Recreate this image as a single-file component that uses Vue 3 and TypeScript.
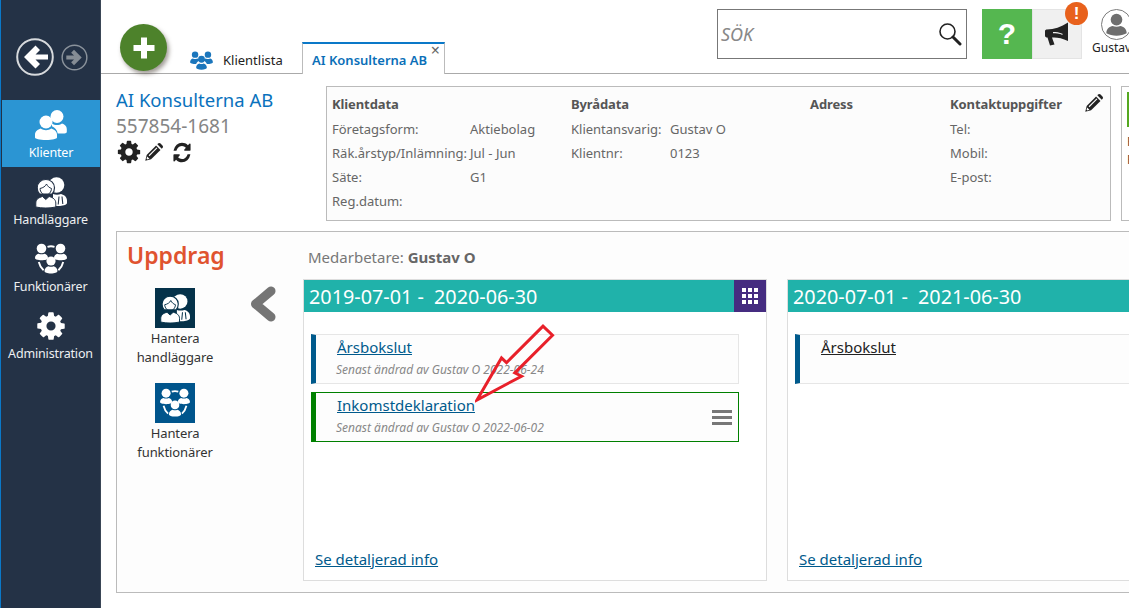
<script setup lang="ts">
// sidomeny och uppdragskort drivs av enkla listor
const nav = [
  { label: 'Klienter', icon: 'i-clients', active: true },
  { label: 'Handläggare', icon: 'i-officer', active: false },
  { label: 'Funktionärer', icon: 'i-roles', active: false },
  { label: 'Administration', icon: 'i-gear', active: false },
]

const tools = [
  { lines: ['Hantera', 'handläggare'], icon: 'i-officer', cls: 'dark' },
  { lines: ['Hantera', 'funktionärer'], icon: 'i-roles', cls: 'blue' },
]

const infoCols = [
  {
    title: 'Klientdata',
    cls: 'c1',
    rows: [
      ['Företagsform:', 'Aktiebolag'],
      ['Räk.årstyp/Inlämning:', 'Jul - Jun'],
      ['Säte:', 'G1'],
      ['Reg.datum:', ''],
    ],
  },
  {
    title: 'Byrådata',
    cls: 'c2',
    rows: [
      ['Klientansvarig:', 'Gustav O'],
      ['Klientnr:', '0123'],
    ],
  },
  { title: 'Adress', cls: 'c3', rows: [] },
  {
    title: 'Kontaktuppgifter',
    cls: 'c4',
    rows: [
      ['Tel:', ''],
      ['Mobil:', ''],
      ['E-post:', ''],
    ],
  },
]
</script>

<template>
  <svg class="sprite" aria-hidden="true">
    <symbol id="i-gear" viewBox="0 0 1792 1792">
      <path d="M1152 896q0-106-75-181t-181-75-181 75-75 181 75 181 181 75 181-75 75-181zm512-109v222q0 12-8 23t-20 13l-185 28q-19 54-39 91 35 50 107 138 10 12 10 25t-9 23q-27 37-99 108t-94 71q-12 0-26-9l-138-108q-44 23-91 38-16 136-29 186-7 28-36 28h-222q-14 0-24.5-8.5t-11.5-21.5l-28-184q-49-16-90-37l-141 107q-10 9-25 9-14 0-25-11-126-114-165-168-7-10-7-23 0-12 8-23 15-21 51-66.5t54-70.5q-27-50-41-99l-183-27q-13-2-21-12.5t-8-23.5v-222q0-12 8-23t19-13l186-28q14-46 39-92-40-57-107-138-10-12-10-24 0-10 9-23 26-36 98.5-107.5t94.5-71.5q13 0 26 10l138 107q44-23 91-38 16-136 29-186 7-28 36-28h222q14 0 24.5 8.5t11.5 21.5l28 184q49 16 90 37l142-107q9-9 24-9 13 0 25 10 129 119 165 170 7 8 7 22 0 12-8 23-15 21-51 66.5t-54 70.5q26 50 41 98l183 28q13 2 21 12.5t8 23.5z" />
    </symbol>
    <symbol id="i-pencil" viewBox="0 0 24 24">
      <path d="M1.500 22.500l1.700-7L14.500 4.200l5.300 5.300L8.500 20.800z" />
      <path d="M16 2.700l.8-.8c.9-.9 2.200-.9 3.100 0l2.200 2.200c.9.900.9 2.200 0 3.100l-.8.8z" />
      <path d="M6 16.500L15.500 7" stroke="#fff" stroke-width="1.300" fill="none" />
      <path d="M3.800 17.500l2.700 2.700-2.600.7-.8-.8z" fill="#fff" />
    </symbol>
    <symbol id="i-refresh" viewBox="0 0 1792 1792" preserveAspectRatio="none">
      <path d="M1639 1056q0 5-1 7-64 268-268 434.5t-478 166.5q-146 0-282.5-55t-243.5-157l-129 129q-19 19-45 19t-45-19-19-45v-448q0-26 19-45t45-19h448q26 0 45 19t19 45-19 45l-137 137q71 66 161 102t187 36q134 0 250-65t186-179q11-17 53-117 8-23 30-23h192q13 0 22.5 9.5t9.5 22.5zm25-800v448q0 26-19 45t-45 19h-448q-26 0-45-19t-19-45 19-45l138-138q-148-137-349-137-134 0-250 65t-186 179q-11 17-53 117-8 23-30 23h-199q-13 0-22.5-9.5t-9.5-22.5v-7q65-268 270-434.5t480-166.5q146 0 284 55.5t245 156.5l130-129q19-19 45-19t45 19 19 45z" />
    </symbol>
    <symbol id="i-clients" viewBox="0 0 32 32">
      <circle cx="22" cy="7.500" r="6.500" />
      <path d="M17 14.500c3 2 7 2 10 0 2.500.8 4.800 2.500 4.800 5.500v2.800c0 1-1 1.700-2.300 1.700h-6.800c-.6-3.600-2.800-6-5.700-7.200 0-1.300 0-2 0-2z" />
      <circle cx="11" cy="13" r="6.500" />
      <path d="M5.700 19.500c3 2.300 7.600 2.300 10.600 0 3 .9 5.700 3 5.700 6v3c0 1.300-4.500 2.500-11 2.500S0 29.800 0 28.500v-3c0-3 2.700-5.100 5.700-6z" />
    </symbol>
    <symbol id="i-officer" viewBox="0 0 32 32">
      <circle cx="21.500" cy="9" r="7.800" />
      <path d="M18 18c2.500 1 5.500 1 8 0 3.500.9 6 3 6 6.500V27c0 1.500-3 2.700-7 3h-7z" />
      <path d="M24 20.500l-.8 8M27 20.500l.8 7.500" fill="none" stroke="var(--cut)" stroke-width="1.100" />
      <path d="M10.800 3.500c5 0 8.700 3.500 8.700 8.200 0 2.800-.9 4.800-2.400 6.300H4.500C3 16.500 2.200 14.500 2.200 11.700c0-4.700 3.600-8.200 8.600-8.200z" stroke="var(--cut)" stroke-width="1.200" />
      <path d="M5 12.500c3-.6 5.500-2.200 6.500-4.500 1 2.200 2.800 3.800 5 4.500M5 12.500c.2 3.500 2.700 6.500 5.800 6.500s5.500-3 5.700-6.500" fill="none" stroke="var(--cut)" stroke-width="1" />
      <path d="M.8 31v-4c0-3.500 2.900-5.500 6.700-6.500l3.300 3 3.300-3c3.800 1 6.700 3 6.700 6.500v4c-3 .7-6.500 1-10 1s-7-.3-10-1z" stroke="var(--cut)" stroke-width="1" />
    </symbol>
    <symbol id="i-roles" viewBox="0 0 32 32">
      <circle cx="6.500" cy="5.500" r="4.800" />
      <path d="M0 15c0-2.500 2-4 3.500-4.300 1.800.8 4.200.8 6 0 1.500.3 3.500 1.800 3.500 4.300 0 1.300-2.800 2.300-6.500 2.300S0 16.300 0 15z" />
      <circle cx="25.500" cy="5.500" r="4.800" />
      <path d="M19 15c0-2.500 2-4 3.500-4.300 1.800.8 4.200.8 6 0 1.500.3 3.500 1.800 3.500 4.300 0 1.300-2.800 2.300-6.500 2.300S19 16.300 19 15z" />
      <circle cx="16" cy="18" r="4.600" />
      <path d="M9.500 28c0-2.700 2.200-4.500 4-4.800 1.500.8 3.500.8 5 0 1.800.3 4 2.100 4 4.800 0 1.500-2.800 2.500-6.500 2.500S9.500 29.500 9.500 28z" />
      <path fill="none" stroke="currentColor" stroke-width="1.900" d="M12.500 3.800c2.200-.7 4.800-.7 7 0M3.800 19c.8 3.500 2.400 6.200 4.800 8.300M28.200 19c-.8 3.500-2.400 6.200-4.800 8.300" />
    </symbol>
  </svg>

  <div class="shell">
    <aside class="side">
      <div class="history">
        <svg class="hist-back" viewBox="0 0 40 40">
          <circle cx="20" cy="20" r="17.800" fill="none" stroke="#d7dadd" stroke-width="2" />
          <path d="M20.500 8.500l4.500 4.500-4.500 4.500H33v5H20.500l4.500 4.500-4.500 4.500L9 20z" fill="#fff" />
        </svg>
        <svg class="hist-next" viewBox="0 0 28 28">
          <circle cx="14" cy="14" r="12.800" fill="none" stroke="#8a929b" stroke-width="1.500" />
          <path d="M13.500 6l-3 3 3 3H5.500v4h8l-3 3 3 3L21.500 14z" fill="#858c94" />
        </svg>
      </div>
      <nav class="nav">
        <a v-for="item in nav" :key="item.label" class="nav-item" :class="{ active: item.active }">
          <svg class="nav-icon"><use :href="'#' + item.icon" /></svg>
          <span>{{ item.label }}</span>
        </a>
      </nav>
    </aside>

    <main class="main">
      <header class="top">
        <button class="add">
          <svg viewBox="0 0 24 24"><path d="M9 1.500h6V9h7.500v6H15v7.500H9V15H1.500V9H9z" fill="#fff" /></svg>
        </button>
        <div class="tabs">
          <div class="tab list">
            <svg class="tab-icon" viewBox="0 0 32 28">
              <g fill="#1b76bc">
                <circle cx="7" cy="6.500" r="4.500" /><path d="M0 17c0-3 2.500-5 4-5.200 2 1 4 1 6 0 1.300.3 3 1.200 3.500 2.800-2.500 1-4.500 2.600-5 5-5 0-8.500-1-8.500-2.600z" />
                <circle cx="25" cy="6.500" r="4.500" /><path d="M32 17c0-3-2.500-5-4-5.200-2 1-4 1-6 0-1.300.3-3 1.200-3.500 2.800 2.500 1 4.500 2.600 5 5 5 0 8.500-1 8.500-2.600z" />
                <circle cx="16" cy="13" r="4.800" /><path d="M8.500 24.500c0-3 2.500-5.200 4.500-5.600 2 1 4 1 6 0 2 .4 4.500 2.600 4.500 5.600 0 1.800-3.300 3-7.500 3s-7.500-1.200-7.500-3z" />
              </g>
            </svg>
            <span>Klientlista</span>
          </div>
          <div class="tab current">
            <span>AI Konsulterna AB</span>
            <i class="close">×</i>
          </div>
        </div>
        <div class="search">
          <span class="search-hint">SÖK</span>
          <svg viewBox="0 0 24 24">
            <circle cx="9.500" cy="9.500" r="7.500" fill="none" stroke="#222" stroke-width="1.600" />
            <path d="M15 15l7 7" stroke="#222" stroke-width="3" stroke-linecap="round" />
          </svg>
        </div>
        <button class="help">?</button>
        <button class="news">
          <svg viewBox="0 0 26 24">
            <path d="M1 9c0-1 1-1.500 2-1.500 7 0 14-2.500 21-7V19c-6-3-12-4-16-3.500l2.500 7-4.500 1-2.500-8C2 15.500 1 15 1 13.500z" fill="#222" />
            <path d="M9 11.200c3 0 6.500.2 9.500 1.800v-1.200c-3-1.400-6.500-1.800-9.500-1.800z" fill="#f0f0f0" />
          </svg>
          <span class="badge">!</span>
        </button>
        <div class="user">
          <svg viewBox="0 0 32 32">
            <circle cx="16" cy="16" r="15.500" fill="#fff" stroke="#777" />
            <circle cx="16" cy="11" r="6" fill="#6e6e6e" />
            <path d="M5.500 25c0-5 3.500-7 6.500-7.500 2.500 1 5.500 1 8 0 3 .5 6.500 2.500 6.500 7.500-3 1.500-6.500 2.500-10.500 2.500S8.500 26.500 5.500 25z" fill="#6e6e6e" />
          </svg>
          <span>Gustav O</span>
        </div>
      </header>

      <section class="client">
        <div class="identity">
          <h1>AI Konsulterna AB</h1>
          <div class="orgnr">557854-1681</div>
          <div class="actions">
            <svg class="a-gear"><use href="#i-gear" /></svg>
            <svg class="a-pencil"><use href="#i-pencil" /></svg>
            <svg class="a-refresh"><use href="#i-refresh" /></svg>
          </div>
        </div>
        <div class="info">
          <div v-for="col in infoCols" :key="col.title" class="info-col" :class="col.cls">
            <h3>{{ col.title }}</h3>
            <div v-for="row in col.rows" :key="row[0]" class="info-row">
              <span>{{ row[0] }}</span><span>{{ row[1] }}</span>
            </div>
          </div>
          <svg class="info-edit"><use href="#i-pencil" /></svg>
        </div>
        <div class="next-box">
          <div class="next-flag"></div>
          <div class="next-line">F</div>
          <div class="next-line">F</div>
        </div>
      </section>

      <section class="panel">
        <div class="panel-side">
          <h2>Uppdrag</h2>
          <div class="panel-tools">
            <div class="tools">
              <a v-for="tool in tools" :key="tool.icon" class="tool">
                <span class="tool-icon" :class="tool.cls"><svg><use :href="'#' + tool.icon" /></svg></span>
                <span v-for="line in tool.lines" :key="line" class="tool-line">{{ line }}</span>
              </a>
            </div>
            <svg class="prev" viewBox="0 0 28 38">
              <path d="M22 6L6.500 19 22 32" fill="none" stroke="#757575" stroke-width="9" stroke-linejoin="round" stroke-linecap="round" />
            </svg>
          </div>
        </div>

        <div class="panel-body">
          <div class="staff">Medarbetare: <b>Gustav O</b></div>
          <div class="years">
            <article class="year">
              <div class="year-head">
                <span>2019-07-01 -&nbsp; 2020-06-30</span>
                <span class="year-menu">
                  <svg viewBox="0 0 16 16"><path d="M0 0h4v4H0zM6 0h4v4H6zM12 0h4v4h-4zM0 6h4v4H0zM6 6h4v4H6zM12 6h4v4h-4zM0 12h4v4H0zM6 12h4v4H6zM12 12h4v4h-4z" fill="#fff" /></svg>
                </span>
              </div>
              <div class="year-rows">
                <div class="job">
                  <a class="job-title">Årsbokslut</a>
                  <div class="job-meta">Senast ändrad av Gustav O 2022-06-24</div>
                </div>
                <div class="job hot">
                  <a class="job-title">Inkomstdeklaration</a>
                  <div class="job-meta">Senast ändrad av Gustav O 2022-06-02</div>
                  <span class="burger"><i></i><i></i><i></i></span>
                </div>
              </div>
              <a class="more">Se detaljerad info</a>
            </article>

            <article class="year">
              <div class="year-head"><span>2020-07-01 -&nbsp; 2021-06-30</span></div>
              <div class="year-rows">
                <div class="job plain">
                  <a class="job-title">Årsbokslut</a>
                </div>
              </div>
              <a class="more">Se detaljerad info</a>
            </article>
          </div>
        </div>
      </section>

      <!-- utritad pil ovanpa skarmbilden -->
      <svg class="callout" viewBox="0 0 90 85">
        <path d="M2 79L26.500 37l5 4.700 36.500-36.500 9.500 9-37.700 37.700 6.700 3.300z" fill="none" stroke="#e8202a" stroke-width="3" />
      </svg>
    </main>
  </div>
</template>

<style>
html, body { margin: 0; background: #fff; overflow: hidden; }
</style>

<style scoped>
.sprite { position: absolute; width: 0; height: 0; overflow: hidden; }
.shell { display: flex; width: 1129px; height: 608px; overflow: hidden; font-family: "Noto Sans", "Open Sans", sans-serif; color: #333; font-size: 13px; }

.side { flex: 0 0 101px; box-sizing: border-box; background: #243246; border-left: 1px solid #0a78c8; border-right: 1px solid #3a4656; color: #e8eaed; --cut: #243246; }
.history { display: flex; align-items: center; height: 100px; padding: 14px 0 0 14px; box-sizing: border-box; gap: 6px; }
.hist-back { width: 40px; height: 40px; }
.hist-next { width: 27px; height: 27px; }
.nav { display: flex; flex-direction: column; }
.nav-item { height: 67px; display: flex; flex-direction: column; align-items: center; justify-content: flex-end; padding-bottom: 6px; box-sizing: border-box; font-size: 12.5px; letter-spacing: -.15px; white-space: nowrap; color: #eef0f2; }
.nav-item.active { background: #2b95d3; margin-left: 1px; color: #fff; }
.nav-icon { width: 32px; height: 32px; fill: #fff; color: #fff; margin-bottom: 3px; }

.main { position: relative; flex: 1; min-width: 0; }
.top { position: relative; display: flex; height: 74px; box-sizing: border-box; border-bottom: 1px solid #aaa; }
.add { flex: none; width: 47px; height: 47px; margin: 24px 0 0 19px; padding: 0; border: 0; border-radius: 50%; background: #4d822b; box-shadow: 2px 3px 4px rgba(70, 60, 50, .5); display: flex; align-items: center; justify-content: center; z-index: 1; }
.add svg { width: 24px; height: 24px; }
.tabs { display: flex; align-items: flex-end; margin-left: 11px; width: 267px; height: 73px; align-self: flex-start; }
.tab { display: flex; align-items: center; height: 32px; box-sizing: border-box; }
.tab.list { width: 124px; padding: 6px 0 0 12px; gap: 10px; }
.tab-icon { width: 23px; height: 20px; }
.tab.list span { font-size: 13px; color: #222; }
.tab.current { position: relative; width: 143px; background: #fff; border: 1px solid #bbb; border-top: 2px solid #0a78c8; border-bottom: 0; padding: 2px 0 0 9px; margin-bottom: -1px; color: #0a6fb8; font-size: 13px; font-weight: 600; }
.close { position: absolute; top: -2px; right: 4px; font-style: normal; font-weight: 400; font-size: 16px; line-height: 16px; color: #666; }
.search { display: flex; align-items: center; justify-content: space-between; width: 250px; height: 50px; margin: 9px 0 0 272px; box-sizing: border-box; border: 1px solid #777; padding: 0 4px 0 3px; flex: none; }
.search-hint { font-size: 18px; font-style: italic; color: #888; }
.search svg { width: 24px; height: 24px; }
.help { flex: none; width: 50px; height: 50px; margin: 9px 0 0 15px; padding: 0; border: 0; background: #55b750; color: #fff; font: 700 30px "Liberation Sans", sans-serif; }
.news { position: relative; flex: none; width: 50px; height: 50px; margin-top: 9px; padding: 0; border: 1px solid #e4e4e4; background: #f0f0f0; display: flex; align-items: center; justify-content: center; }
.news svg { width: 26px; height: 24px; margin-left: -1px; }
.badge { position: absolute; top: -8px; right: -7px; width: 23px; height: 23px; border-radius: 50%; background: #e8611c; color: #fff; font: 700 17px/23px "Liberation Sans", sans-serif; text-align: center; }
.user { flex: none; margin: 9px 0 0 10px; width: 60px; display: flex; flex-direction: column; align-items: flex-start; white-space: nowrap; font-size: 12px; line-height: 16px; color: #222; }
.user svg { width: 31px; height: 31px; margin-left: 9px; }
.user span { margin-top: 0; }

.client { display: flex; height: 157px; padding: 12px 0 0 15px; box-sizing: border-box; align-items: flex-start; }
.identity { flex: 0 0 210px; }
.identity h1 { margin: 0; font-size: 18.500px; line-height: 27px; font-weight: 400; color: #0a72bd; white-space: nowrap; }
.orgnr { font-size: 19px; line-height: 26px; color: #858585; }
.actions { display: flex; align-items: center; height: 26px; fill: #222; }
.a-gear { width: 26px; height: 26px; fill: #222; }
.a-pencil { width: 20px; height: 20px; margin-left: 2px; fill: #222; }
.a-refresh { width: 20px; height: 23px; margin-left: 8px; fill: #222; }

.info { position: relative; display: flex; flex: 0 0 785px; height: 135px; box-sizing: border-box; border: 1px solid #bbb; background: #fcfcfc; padding: 5px 0 0 5px; }
.info-col { flex: none; }
.c1 { width: 239px; }
.c2 { width: 239px; }
.c3 { width: 140px; }
.c1 .info-row { grid-template-columns: 138px 1fr; }
.c2 .info-row { grid-template-columns: 99px 1fr; }
.info-col h3 { margin: 0; font-size: 13px; line-height: 24px; height: 25px; font-weight: 700; color: #555; letter-spacing: -.1px; white-space: nowrap; }
.info-row { display: grid; height: 24px; line-height: 24px; font-size: 13px; color: #666; white-space: nowrap; }
.info-edit { position: absolute; top: 6px; right: 6px; width: 20px; height: 20px; fill: #222; }
.next-box { flex: none; width: 60px; height: 135px; margin-left: 10px; box-sizing: border-box; border: 1px solid #bbb; padding: 5px 0 0 5px; font-size: 13px; color: #333; }
.next-flag { width: 12px; height: 35px; background: #55a820; margin-bottom: 5px; }
.next-line { height: 18px; line-height: 18px; }

.panel { display: flex; margin-left: 15px; width: 1100px; height: 362px; box-sizing: border-box; border: 1px solid #bbb; background: #fdfdfd; }
.panel-side { flex: 0 0 186px; }
.panel-side h2 { margin: 6px 0 0 10px; font-size: 23px; line-height: 34px; font-weight: 600; color: #e0532f; }
.panel-tools { display: flex; margin-top: 16px; }
.tools { width: 116px; display: flex; flex-direction: column; gap: 16px; }
.tool { display: flex; flex-direction: column; align-items: center; font-size: 13px; color: #333; }
.tool-icon { display: flex; width: 40px; height: 40px; align-items: center; justify-content: center; color: #fff; fill: #fff; margin-bottom: 1px; }
.tool-icon svg { width: 30px; height: 30px; }
.tool-icon.dark { background: #05324a; --cut: #05324a; }
.tool-icon.blue { background: #00558c; --cut: #00558c; }
.tool-line { line-height: 19px; letter-spacing: -.1px; white-space: nowrap; }
.prev { width: 28px; height: 38px; margin: -3px 0 0 16px; }

.panel-body { flex: 1; min-width: 0; }
.staff { height: 47px; padding: 13px 0 0 5px; box-sizing: border-box; font-size: 15px; line-height: 24px; color: #777; }
.staff b { font-weight: 700; color: #666; }
.years { display: flex; gap: 20px; }
.year { position: relative; flex: none; width: 464px; height: 302px; box-sizing: border-box; border: 1px solid #ddd; background: #fff; display: flex; flex-direction: column; }
.year-head { display: flex; justify-content: space-between; height: 32px; background: #20b2aa; color: #fff; font-size: 19.800px; line-height: 33px; padding-left: 5px; white-space: nowrap; }
.year-menu { display: flex; width: 32px; align-items: center; justify-content: center; background: #452c80; }
.year-menu svg { width: 16px; height: 16px; }
.year-rows { display: flex; flex-direction: column; gap: 8px; padding: 22px 0 0 7px; flex: 1; }
.job { position: relative; width: 428px; height: 50px; box-sizing: border-box; border: 1px solid #e6e6e6; border-left: 5px solid #005a8c; background: #fdfdfd; padding-left: 21px; }
.job.hot { border-color: #008000; }
.job.plain { border-right: 0; width: 340px; }
.job-title { display: block; font-size: 15px; line-height: 24px; color: #005a8c; text-decoration: underline; }
.job.plain .job-title { color: #222; }
.job-meta { font-size: 12px; line-height: 22px; font-style: italic; color: #888; margin-left: -1px; white-space: nowrap; }
.burger { position: absolute; top: 17px; right: 6px; width: 20px; display: flex; flex-direction: column; gap: 3px; }
.burger i { display: block; height: 3px; background: #777; }
.more { position: absolute; left: 11px; bottom: 11px; font-size: 15px; line-height: 20px; color: #005a8c; text-decoration: underline; }

.callout { position: absolute; left: 374px; top: 321px; width: 90px; height: 85px; pointer-events: none; }
</style>
